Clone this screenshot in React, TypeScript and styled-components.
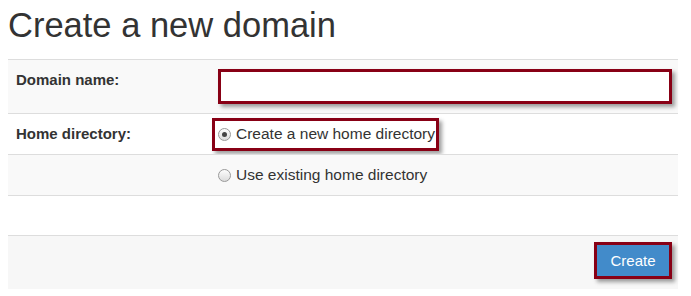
import * as React from 'react';
import styled, { createGlobalStyle } from 'styled-components';

const GlobalStyle = createGlobalStyle`
  html, body {
    margin: 0;
    padding: 0;
    background: #fff;
  }
  body {
    font-family: "Liberation Sans", Arial, sans-serif;
    color: #333;
  }
`;

const MARK = '#880015';
const MARK_SHADOW = '3px 3px 4px rgba(0, 0, 0, 0.38)';

const Page = styled.div`
  width: 670px;
  margin-left: 8px;
`;

const Title = styled.h1`
  margin: 5px 0 14px;
  font-size: 34.5px;
  line-height: 40px;
  font-weight: normal;
  color: #333;
`;

const Table = styled.div`
  display: grid;
  grid-template-columns: 202px 1fr;
`;

const Row = styled.div<{ striped?: boolean; height: number; align?: string }>`
  display: grid;
  grid-column: 1 / -1;
  grid-template-columns: subgrid;
  align-items: ${props => props.align || 'center'};
  height: ${props => props.height}px;
  box-sizing: border-box;
  border-top: 1px solid #ddd;
  background-color: ${props => (props.striped ? '#f9f9f9' : '#fff')};
`;

const LabelCell = styled.div<{ top?: number }>`
  padding: ${props => props.top || 0}px 8px 0;
  font-size: 15px;
  line-height: 20px;
  font-weight: bold;
  color: #333;
`;

const ValueCell = styled.div<{ top?: number }>`
  padding: ${props => props.top || 0}px 6px 0 8px;
`;

const TextInput = styled.input`
  display: block;
  box-sizing: border-box;
  width: 100%;
  height: 35px;
  margin: 0;
  border: 3px solid ${MARK};
  background: #fff;
  box-shadow: ${MARK_SHADOW};
  outline: none;
  font: inherit;
`;

const RadioOption = styled.label<{ marked?: boolean }>`
  display: inline-flex;
  align-items: center;
  gap: 5px;
  height: 33px;
  box-sizing: border-box;
  margin-left: -6px;
  padding: 0 1px 0 3px;
  border: 3px solid ${props => (props.marked ? MARK : 'transparent')};
  box-shadow: ${props => (props.marked ? MARK_SHADOW : 'none')};
  font-size: 15.5px;
  color: #333;
  cursor: pointer;
`;

const RadioDot = styled.span<{ checked?: boolean }>`
  position: relative;
  width: 13px;
  height: 13px;
  box-sizing: border-box;
  border-radius: 50%;
  border: 1px solid #9a9a9a;
  background: linear-gradient(#fdfdfd, #dcdcdc);
  flex: none;

  &::after {
    content: '';
    display: ${props => (props.checked ? 'block' : 'none')};
    position: absolute;
    left: 3px;
    top: 3px;
    width: 5px;
    height: 5px;
    border-radius: 50%;
    background: #444;
  }
`;

const Spacer = styled.div`
  height: 39px;
  border-top: 1px solid #ddd;
`;

const Footer = styled.div`
  display: flex;
  justify-content: flex-end;
  align-items: flex-start;
  height: 54px;
  box-sizing: border-box;
  padding: 6px 6px 0 0;
  border-top: 1px solid #ddd;
  background: #f7f7f7;
`;

const SubmitButton = styled.button`
  width: 78px;
  height: 37px;
  box-sizing: border-box;
  border: 3px solid ${MARK};
  background: #428bca;
  box-shadow: ${MARK_SHADOW};
  color: #fff;
  font-family: "Liberation Sans", Arial, sans-serif;
  font-size: 15px;
  padding: 0;
  cursor: pointer;
`;

export default function App() {
  const [mode, setMode] = React.useState<'new' | 'existing'>('new');

  return (
    <Page>
      <GlobalStyle />
      <Title>Create a new domain</Title>
      <Table>
        <Row striped height={54} align="start">
          <LabelCell top={10}>Domain name:</LabelCell>
          <ValueCell top={9}>
            <TextInput type="text" />
          </ValueCell>
        </Row>
        <Row height={41}>
          <LabelCell>Home directory:</LabelCell>
          <ValueCell>
            <RadioOption marked onClick={() => setMode('new')}>
              <RadioDot checked={mode === 'new'} />
              Create a new home directory
            </RadioOption>
          </ValueCell>
        </Row>
        <Row striped height={41}>
          <LabelCell />
          <ValueCell>
            <RadioOption onClick={() => setMode('existing')}>
              <RadioDot checked={mode === 'existing'} />
              Use existing home directory
            </RadioOption>
          </ValueCell>
        </Row>
      </Table>
      <Spacer />
      <Footer>
        <SubmitButton>Create</SubmitButton>
      </Footer>
    </Page>
  );
}
